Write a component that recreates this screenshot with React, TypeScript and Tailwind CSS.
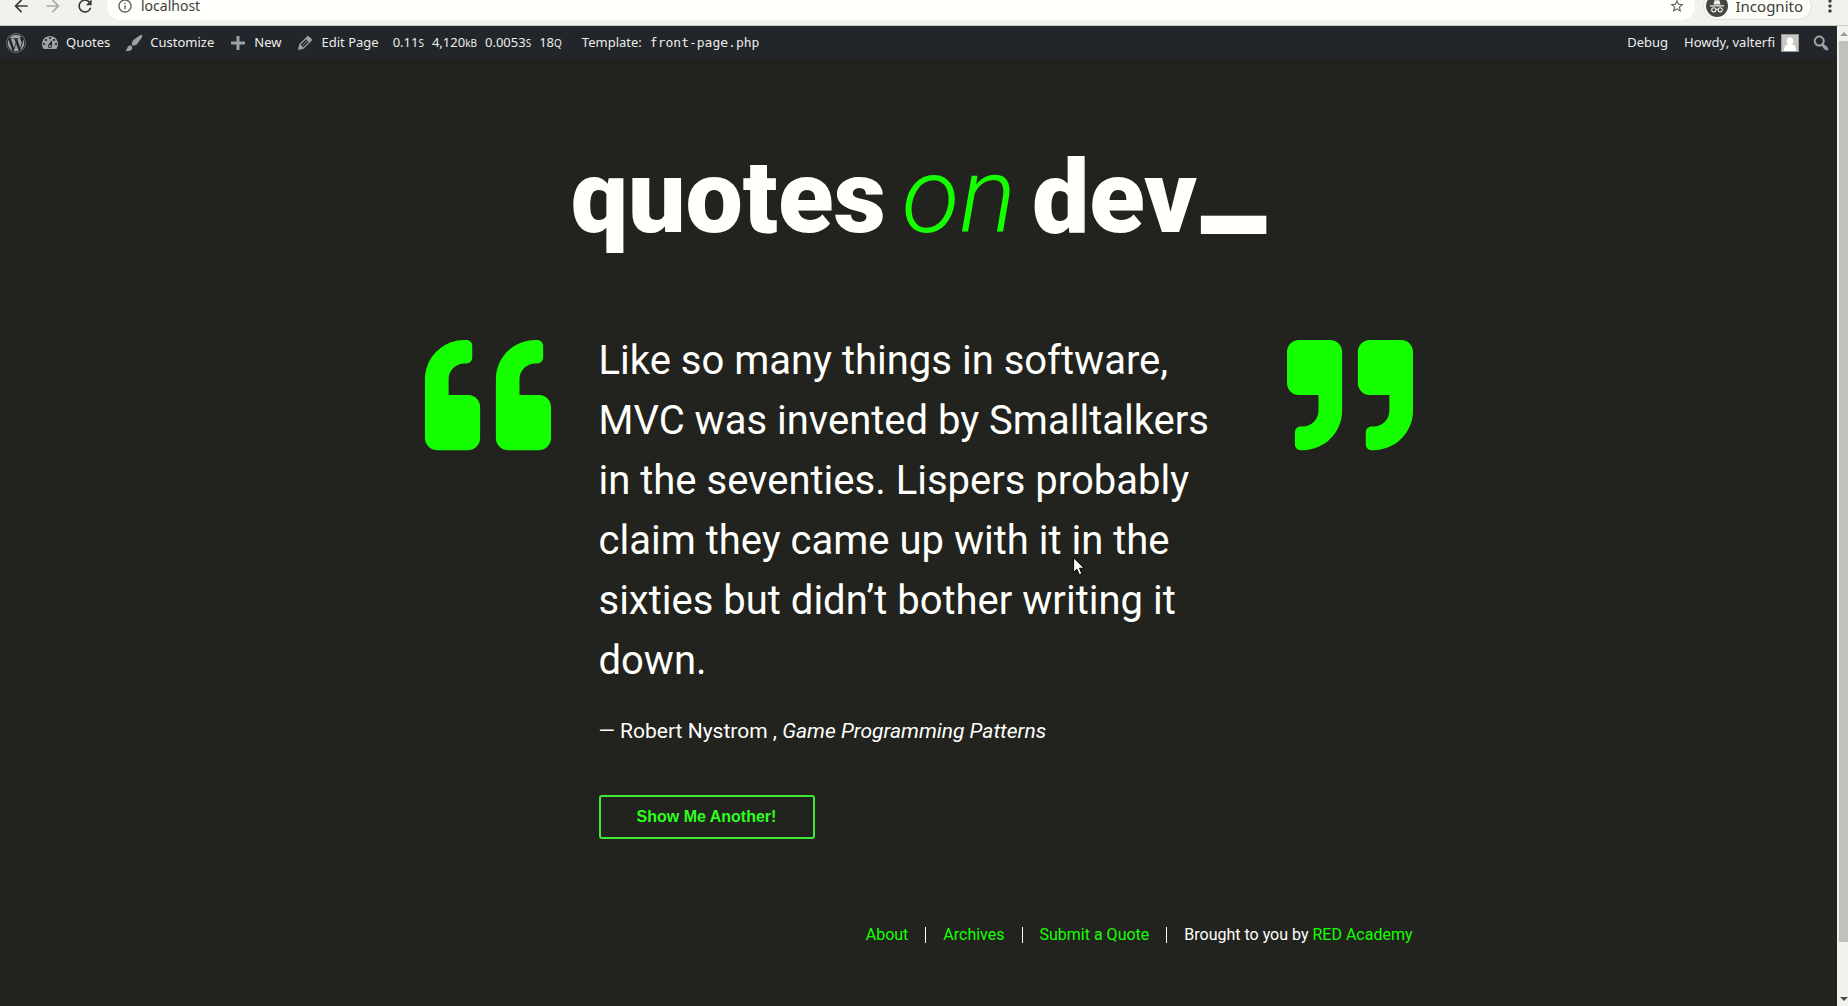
import React from "react";
import { FaQuoteLeft, FaQuoteRight, FaWordpress } from "react-icons/fa";
import { MdArrowBack, MdArrowForward, MdRefresh, MdInfoOutline, MdStarBorder, MdMoreVert } from "react-icons/md";

const icons = {
  dashboard:
    "M3.76 16h12.48c1.1-1.37 1.76-3.11 1.76-5 0-4.42-3.58-8-8-8s-8 3.58-8 8c0 1.89.66 3.63 1.76 5zM10 4c.55 0 1 .45 1 1s-.45 1-1 1-1-.45-1-1 .45-1 1-1zM6 6c.55 0 1 .45 1 1s-.45 1-1 1-1-.45-1-1 .45-1 1-1zm8 0c.55 0 1 .45 1 1s-.45 1-1 1-1-.45-1-1 .45-1 1-1zm-5.37 5.55L12 7v6c0 1.1-.9 2-2 2s-2-.9-2-2c0-.57.24-1.08.63-1.45zM4 10c.55 0 1 .45 1 1s-.45 1-1 1-1-.45-1-1 .45-1 1-1zm12 0c.55 0 1 .45 1 1s-.45 1-1 1-1-.45-1-1 .45-1 1-1zm-5 3c0-.55-.45-1-1-1s-1 .45-1 1 .45 1 1 1 1-.45 1-1z",
  brush:
    "M18.33 3.57s.27-.8-.31-1.36c-.53-.52-1.22-.24-1.22-.24-.61.3-5.76 3.47-7.67 5.57-.86.96-2.06 3.79-1.09 4.82.92.98 3.96-.17 4.79-1 2.06-2.06 5.21-7.17 5.5-7.79zM1.4 17.65c2.37-1.56 1.46-3.41 3.23-4.64.93-.65 2.22-.62 3.08.29.63.67.8 2.57-.16 3.46-1.57 1.45-4 1.55-6.15.89z",
  plus: "M17 8.5v3h-5.5v5.5h-3v-5.5H3v-3h5.5V3h3v5.5H17z",
  edit: "M13.89 3.39l2.71 2.72c.46.46.42 1.24.03 1.64l-8.01 8.02-5.56 1.16 1.16-5.58s7.6-7.63 7.99-8.03c.39-.39 1.22-.39 1.68.07zm-2.73 2.79l-5.59 5.61 1.11 1.11 5.54-5.65zm-2.97 8.23l5.58-5.6-1.07-1.08-5.59 5.6z",
  search:
    "M12.14 4.18c1.87 1.87 2.11 4.75.72 6.89.12.1.22.21.36.31.2.16.47.36.81.59.34.24.56.39.66.47.42.31.73.57.94.78.32.32.6.65.84 1 .25.35.44.69.59 1.04.14.35.21.68.18 1-.02.32-.14.59-.36.81s-.49.34-.81.36c-.31.02-.65-.04-.99-.19-.35-.14-.7-.34-1.04-.59-.35-.24-.68-.52-1-.84-.21-.21-.47-.52-.77-.93-.1-.13-.25-.35-.47-.66-.22-.32-.4-.57-.56-.78-.16-.2-.29-.35-.44-.5-2.07 1.09-4.69.76-6.44-.98-2.14-2.15-2.14-5.64 0-7.78 2.15-2.15 5.63-2.15 7.78 0zm-1.41 6.36c1.36-1.37 1.36-3.58 0-4.95-1.37-1.37-3.59-1.37-4.95 0-1.37 1.37-1.37 3.58 0 4.95 1.36 1.37 3.58 1.37 4.95 0z",
};

function BarIcon({ name }: { name: keyof typeof icons }) {
  return (
    <svg viewBox="0 0 20 20" className="size-5 shrink-0 fill-[#9ca1a7]" aria-hidden="true">
      <path d={icons[name]} />
    </svg>
  );
}

function BarLink({ icon, children }: { icon?: keyof typeof icons; children: React.ReactNode }) {
  return (
    <a href="#" className="flex items-center gap-1.5">
      {icon && <BarIcon name={icon} />}
      {children}
    </a>
  );
}

function BrowserToolbar() {
  return (
    <header className="h-[26px] overflow-hidden border-b border-[#c9c9c6] bg-[#f1f2ed] font-['Noto_Sans',sans-serif] text-[#3c3d3b]">
      <div className="-mt-3.5 flex h-10 items-center pr-2">
        <div className="flex w-[107px] shrink-0 items-center gap-3 pl-[11px]">
          <button aria-label="Back"><MdArrowBack className="size-5" /></button>
          <button aria-label="Forward" className="text-[#a9aaa7]"><MdArrowForward className="size-5" /></button>
          <button aria-label="Reload"><MdRefresh className="size-5" /></button>
        </div>
        <div className="flex h-7 flex-1 items-center gap-2 rounded-full bg-[#fffffc] px-2.5">
          <MdInfoOutline className="size-4 text-[#5c5d5b]" />
          <input aria-label="Address" defaultValue="localhost" className="min-w-0 flex-1 bg-transparent text-sm outline-none" />
          <button aria-label="Bookmark"><MdStarBorder className="size-4 text-[#5c5d5b]" /></button>
        </div>
        <div className="ml-2 flex h-[27px] items-center gap-2 rounded-full border border-[#e0e1dd] bg-[#fbfcf8] pr-2 pl-0.5 text-[15px] leading-3">
          <svg viewBox="0 0 22 22" className="size-[22px]" aria-hidden="true">
            <circle cx="11" cy="11" r="11" fill="#454644" />
            <path d="M7.5 9.5 8.6 5.2h4.8l1.1 4.3zM4 10.2h14v1.2H4z" fill="#f1f2ed" />
            <g fill="none" stroke="#f1f2ed" strokeWidth="1.1">
              <circle cx="7.8" cy="14.8" r="2.1" />
              <circle cx="14.2" cy="14.8" r="2.1" />
              <path d="M9.9 14.6q1.1-.8 2.2 0" />
            </g>
          </svg>
          Incognito
        </div>
        <button aria-label="Menu" className="ml-2"><MdMoreVert className="size-5" /></button>
      </div>
    </header>
  );
}

function AdminBar() {
  return (
    <nav className="flex h-8 items-center justify-between bg-[#22252a] px-1.5 pt-0.5 font-['Noto_Sans',sans-serif] text-[13px] whitespace-nowrap text-[#ecedea]">
      <div className="flex items-center gap-3.5">
        <a href="#" aria-label="WordPress"><FaWordpress className="size-5 text-[#9ca1a7]" /></a>
        <BarLink icon="dashboard">Quotes</BarLink>
        <BarLink icon="brush">Customize</BarLink>
        <BarLink icon="plus">New</BarLink>
        <BarLink icon="edit">Edit Page</BarLink>
        <a href="#" className="mr-1.5 flex items-baseline gap-2">
          <span>0.11<small className="text-[10px]">S</small></span>
          <span>4,120<small className="text-[10px]">kB</small></span>
          <span>0.0053<small className="text-[10px]">S</small></span>
          <span>18<small className="text-[10px]">Q</small></span>
        </a>
        <a href="#" className="flex items-baseline gap-2">
          Template: <code className="font-['DejaVu_Sans_Mono',monospace] text-[13px]">front-page.php</code>
        </a>
      </div>
      <div className="flex items-center gap-3">
        <BarLink>Debug</BarLink>
        <a href="#" className="ml-1 flex items-center gap-1.5">
          Howdy, valterfi
          <svg viewBox="0 0 18 18" className="size-[18px]" aria-hidden="true">
            <path d="M0 0h18v18H0z" fill="#9a9b99" />
            <path d="M1 1h16v16H1z" fill="#c6c7c4" />
            <path d="M9 3.2a3.6 3.9 0 0 1 2 7.1c2.600.6 4 2.700 4 6.700H3c0-4 1.400-6.100 4-6.700a3.600 3.900 0 0 1 2-7.100z" fill="#fffffc" />
          </svg>
        </a>
        <button aria-label="Search"><BarIcon name="search" /></button>
      </div>
    </nav>
  );
}

function Scrollbar() {
  return (
    <div className="flex w-[11px] shrink-0 flex-col items-end bg-[#f1f2ed]" aria-hidden="true">
      <svg viewBox="0 0 9 15" className="h-[15px] w-[9px]"><path d="M1 10h8L5 6z" fill="#9a9b99" /></svg>
      <div className="w-[9px] flex-1 bg-[#c0c1bd]" />
      <svg viewBox="0 0 9 64" className="h-16 w-[9px]"><path d="M1 55h8l-4 4z" fill="#4c4d4b" /></svg>
    </div>
  );
}

const link = "text-[#15ff00]";

export default function App() {
  return (
    <div className="relative flex min-h-screen flex-col bg-[#22231f]">
      <BrowserToolbar />
      <div className="flex flex-1">
        <div className="flex min-w-0 flex-1 flex-col">
          <AdminBar />
          <div className="mx-auto w-full max-w-[988px] font-[Roboto,sans-serif] text-[#fffffc]">
            <h1 className="flex h-[200px] items-baseline justify-center gap-4 pt-[78px] text-[102px] leading-[120px] font-black">
              <span>quotes</span>
              <em className="text-[106px] font-light text-[#15ff00]">on</em>
              <span>
                dev<span className="ml-1 align-[16px] text-[148px] leading-0">_</span>
              </span>
            </h1>
            <main className="mt-[73px] flex items-start gap-12">
              <FaQuoteLeft className="mt-px size-[126px] shrink-0 text-[#15ff00]" aria-hidden="true" />
              <article className="min-w-0 flex-1">
                <blockquote className="text-[40px] leading-[60px]">
                  Like so many things in software, MVC was invented by Smalltalkers in the seventies. Lispers probably
                  claim they came up with it in the sixties but didn’t bother writing it down.
                </blockquote>
                <p className="mt-6 text-[21px] leading-8">
                  — Robert Nystrom , <cite>Game Programming Patterns</cite>
                </p>
                <button className="mt-12 h-11 w-[216px] rounded-[3px] border-2 border-[#3fe832] font-['Liberation_Sans',sans-serif] text-base font-bold text-[#2cff1c]">
                  Show Me Another!
                </button>
              </article>
              <FaQuoteRight className="mt-px size-[126px] shrink-0 text-[#15ff00]" aria-hidden="true" />
            </main>
            <footer className="mt-[84px] flex items-center justify-end gap-[17px] pb-8 text-base">
              <a href="#" className={link}>About</a>
              <span className="h-4 w-px bg-[#fffffc]" />
              <a href="#" className={link}>Archives</a>
              <span className="h-4 w-px bg-[#fffffc]" />
              <a href="#" className={link}>Submit a Quote</a>
              <span className="h-4 w-px bg-[#fffffc]" />
              <span>Brought to you by <a href="#" className={link}>RED Academy</a></span>
            </footer>
          </div>
        </div>
        <Scrollbar />
      </div>
      <svg viewBox="0 0 12 19" className="absolute top-[557px] left-[1073px] h-[19px] w-3" aria-hidden="true">
        <path d="M.6.8v14.500l3.300-3.100 2.400 5.600 2.600-1.100-2.400-5.500h4.700z" fill="#fffffc" stroke="#000" strokeWidth="1" />
      </svg>
    </div>
  );
}
